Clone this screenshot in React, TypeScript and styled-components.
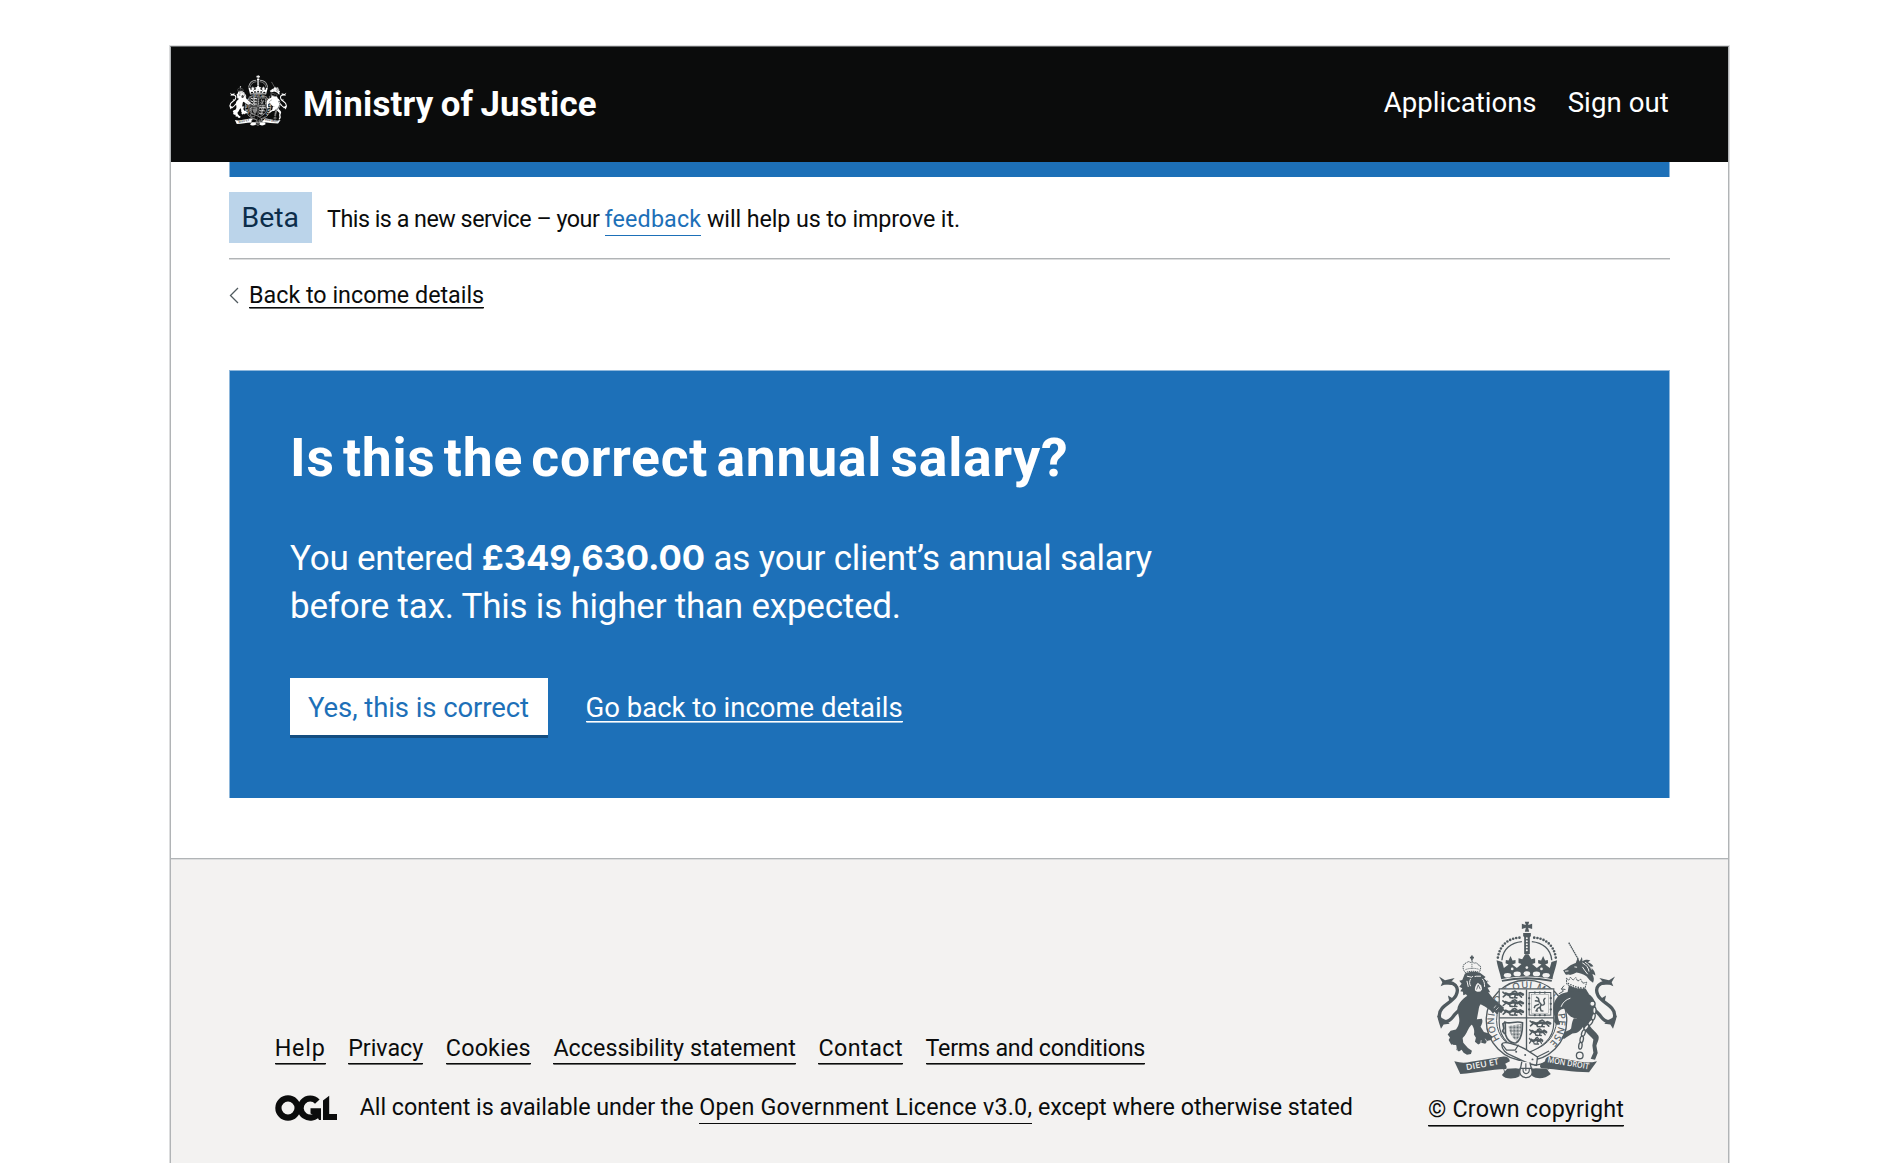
import React from "react";
import styled, { createGlobalStyle } from "styled-components";

const colour = {
  black: "#0b0c0c",
  blue: "#1d70b8",
  blueEdge: "#8eb7db",
  tagBg: "#bbd4ea",
  tagText: "#0c2d4a",
  border: "#b1b4b6",
  borderSoft: "#dcddde",
  footer: "#f3f2f1",
  crest: "#505a5f",
  white: "#ffffff",
};

const GlobalStyle = createGlobalStyle`
  *, *::before, *::after { box-sizing: border-box; }
  html, body { margin: 0; background: #fff; height: 1163px; overflow: hidden; }
  body { font-family: Roboto, "Noto Sans", sans-serif; color: ${colour.black}; }
  h1, p, ul { margin: 0; padding: 0; font-weight: 400; }
  a { color: inherit; text-decoration: none; }
`;

const Frame = styled.div`
  width: 1559px;
  height: 1163px;
  margin: 46px 0 0 170px;
  border: 1px solid ${colour.border};
  border-top-color: #626465;
  box-shadow: 0 0 0 1px ${colour.borderSoft};
  display: flex;
  flex-direction: column;
`;

const Header = styled.header`
  flex: none;
  height: 115px;
  padding: 0 59px 8px 58px;
  background: ${colour.black};
  color: ${colour.white};
  display: flex;
  align-items: center;
`;

const Organisation = styled.a`
  display: flex;
  align-items: center;
  gap: 16px;
`;

const OrganisationName = styled.span`
  font-size: 34.8px;
  line-height: 40px;
  font-weight: 700;
  letter-spacing: 0.25px;
  word-spacing: -1.8px;
  padding-top: 6px;
`;

const HeaderNav = styled.nav`
  margin-left: auto;
  display: flex;
  gap: 31px;
  padding-top: 4px;
`;

const HeaderLink = styled.a<{ $tracking?: number }>`
  font-size: 27.6px;
  line-height: 36px;
  letter-spacing: ${(p) => p.$tracking ?? 0}px;
`;

const Container = styled.div`
  flex: none;
  height: 696px;
  padding: 0 58px;
  display: flex;
  flex-direction: column;
`;

const BlueBar = styled.div`
  flex: none;
  height: 15px;
  background: ${colour.blue};
  border: solid ${colour.blueEdge};
  border-width: 0 1px;
`;

const PhaseBanner = styled.div`
  flex: none;
  height: 82px;
  padding: 15px 0;
  display: flex;
  align-items: center;
  gap: 15px;
  border-bottom: 1px solid ${colour.border};
  box-shadow: 0 1px 0 ${colour.borderSoft};
`;

const Tag = styled.strong`
  width: 83px;
  height: 51px;
  padding-left: 12.5px;
  background: ${colour.tagBg};
  color: ${colour.tagText};
  font-size: 28.4px;
  font-weight: 400;
  line-height: 51px;
`;

const PhaseText = styled.p`
  font-size: 23.3px;
  line-height: 30px;
  letter-spacing: -0.5px;
  padding-top: 3px;
  span { letter-spacing: -0.1px; }
`;

const FeedbackLink = styled.a`
  color: ${colour.blue};
  letter-spacing: 0.15px;
  padding-bottom: 2px;
  border-bottom: 1.5px solid ${colour.blue};
`;

const BackRow = styled.div`
  flex: none;
  display: flex;
  align-items: flex-start;
  gap: 10px;
  padding-top: 25px;
  height: 111px;
`;

const Chevron = styled.svg`
  width: 10px;
  height: 17px;
  margin-top: 3px;
`;

const TextLink = styled.a<{ $size: number; $tracking?: number; $gap: number }>`
  display: block;
  font-size: ${(p) => p.$size}px;
  line-height: ${(p) => 2 * (p.$gap + 0.3418 * p.$size)}px;
  letter-spacing: ${(p) => p.$tracking ?? 0}px;
  border-bottom: 1.5px solid currentColor;
  box-shadow: 0 1px 0 -0.4px currentColor;
  white-space: nowrap;
`;

const Panel = styled.main`
  flex: none;
  height: 428px;
  padding: 53px 60px 0 60px;
  background: ${colour.blue};
  color: ${colour.white};
  border: solid ${colour.blueEdge};
  border-width: 1px 1px 0;
`;

const Title = styled.h1`
  font-size: 53.5px;
  line-height: 67px;
  font-weight: 700;
  letter-spacing: 0.75px;
  word-spacing: -5.8px;
`;

const Body = styled.p`
  width: 900px;
  margin-top: 44px;
  font-size: 35px;
  line-height: 48px;
  letter-spacing: -0.22px;
  strong {
    font-family: Inter, sans-serif;
    font-size: 34.6px;
    line-height: 1;
    letter-spacing: -0.05px;
  }
`;

const Actions = styled.div`
  display: flex;
  align-items: flex-start;
  gap: 38px;
  margin: 47px 0 0 -0.5px;
`;

const Button = styled.button`
  width: 258px;
  height: 57px;
  padding: 2px 0 0;
  border: 0;
  background: ${colour.white};
  color: ${colour.blue};
  box-shadow: 0 3px 0 #144e81;
  font: 400 27.5px/55px Roboto, sans-serif;
  letter-spacing: -0.08px;
`;

const ActionLink = styled(TextLink)`
  margin-top: 17px;
`;

const Footer = styled.footer`
  flex: 1;
  padding: 0 58px 0 103.7px;
  background: ${colour.footer};
  border-top: 1px solid ${colour.border};
  box-shadow: inset 0 1px 0 ${colour.borderSoft};
  display: flex;
  justify-content: space-between;
`;

const FooterMeta = styled.div`
  padding-top: 175px;
`;

const FooterLinks = styled.ul`
  display: flex;
  gap: 22.6px;
  list-style: none;
`;

const Licence = styled.div`
  display: flex;
  align-items: center;
  gap: 22px;
  margin-top: 27px;
`;

const LicenceText = styled.p`
  font-size: 23.3px;
  line-height: 32px;
  letter-spacing: -0.04px;
  padding-bottom: 2px;
  white-space: nowrap;
  a {
    letter-spacing: 0.22px;
    padding-bottom: 2px;
    border-bottom: 1.5px solid ${colour.black};
  }
`;

const Copyright = styled.div`
  width: 196px;
  margin: 62px 46px 0 0;
  display: flex;
  flex-direction: column;
  align-items: center;
  gap: 15px;
`;

const BeltText = styled.text`
  font: 400 28px "Open Sans", "Noto Sans", sans-serif;
`;

const MottoText = styled.text`
  font: 600 25px "Open Sans", "Noto Sans", sans-serif;
`;

type CrestProps = { width: number; height: number; ink: string; paper: string; id: string };

function RoyalLion({ ink }: { ink: string }) {
  return (
    <g fill="none" stroke={ink} strokeWidth="4.8" strokeLinecap="round">
      <path d="M10 6l10 4 12-4 14 3 8-4 8 4" strokeWidth="8" />
      <path d="M10 10l-7 6M21 10l3 8 8 1M40 10l-3 8 7 1M50 9l8 8M2 2l5 4M30 2l8-3 6 4" />
    </g>
  );
}

function Tail({ ink }: { ink: string }) {
  return (
    <>
      <path d="M72 221C104 213 120 234 108 258C98 279 58 288 58 317C58 343 84 342 99 322C108 308 118 302 134 290" fill="none" stroke={ink} strokeWidth="10" />
      <path d="M57 201l18 11 29-7-10 12 8 10-26-3-14 6 5-12z" fill={ink} />
      <path d="M51 318l6 22 6 18 8-13 18-2-9-10z" fill={ink} />
      <path d="M88 276l-4-18 16 10z" fill={ink} />
    </>
  );
}

function RoyalArms({ width, height, ink, paper, id }: CrestProps) {
  return (
    <svg width={width} height={height} viewBox="48 34 544 478" preserveAspectRatio="none" aria-hidden="true">
      <defs>
        <path id={`${id}-belt`} d="M240 389A97 97 0 0 1 320 236A97 97 0 0 1 385 405" />
        <path id={`${id}-left`} d="M140 483L246 463" />
        <path id={`${id}-right`} d="M382 459L512 481" />
        <pattern id={`${id}-harp`} width="6" height="6" patternUnits="userSpaceOnUse" patternTransform="rotate(45)">
          <path d="M0 0h3v3h-3zM3 3h3v3h-3z" fill={ink} />
        </pattern>
      </defs>

      <Tail ink={ink} />
      <g transform="matrix(-1 0 0 1 643 0)">
        <Tail ink={ink} />
      </g>

      {/* garter */}
      <circle cx="320" cy="333" r="121" fill={paper} stroke={ink} strokeWidth="4" />
      <circle cx="320" cy="333" r="90" fill={paper} stroke={ink} strokeWidth="3" />
      <BeltText fill={ink} stroke={ink} strokeWidth="0.6">
        <textPath href={`#${id}-belt`} textLength="440">HONI SOIT QUI MAL Y PENSE</textPath>
      </BeltText>

      {/* shield */}
      <path d="M238 238H402V340C402 390 366 415 320 432C274 415 238 390 238 340Z" fill={paper} stroke={ink} strokeWidth="3.5" />
      <path d="M320 240V430M238 325H402" stroke={ink} strokeWidth="4" />
      {[246, 272, 298].map((y) => (
        <g key={y} transform={`translate(247 ${y})`}>
          <RoyalLion ink={ink} />
        </g>
      ))}
      {[333, 359, 385].map((y, i) => (
        <g key={y} transform={`translate(${329 - i} ${y}) scale(${1 - i * 0.17} 1)`}>
          <RoyalLion ink={ink} />
        </g>
      ))}
      <rect x="328" y="249" width="65" height="68" fill="none" stroke={ink} strokeWidth="3" />
      <rect x="334" y="255" width="53" height="56" fill="none" stroke={ink} strokeWidth="1" />
      <g fill={ink}>
        {[345, 360, 375].map((x) => (
          <g key={x}>
            <circle cx={x} cy="249" r="3.4" />
            <circle cx={x} cy="317" r="3.4" />
          </g>
        ))}
        {[266, 283, 300].map((y) => (
          <g key={y}>
            <circle cx="328" cy={y} r="3.4" />
            <circle cx="393" cy={y} r="3.4" />
          </g>
        ))}
      </g>
      <path
        d="M349 262l7 5 2 10 6 8-3 9 3 11M357 275l-12-1M358 284l-12 5-3 7M362 292l-9 5-4 8M364 286c8 3 12-2 9-9-3-5 0-9 4-11M347 304l8 1M363 304l8 1"
        fill="none"
        stroke={ink}
        strokeWidth="4.4"
      />
      <path d="M256 338c14 8 32-6 52 2l-1 22c-2 16-8 32-18 38-16 4-28-10-32-24z" fill={paper} stroke={ink} strokeWidth="5" />
      <path d="M266 350l38-6c1 22-4 42-15 50-12-8-20-22-23-44z" fill={`url(#${id}-harp)`} />
      <path d="M256 338l-7 5 3 14-4 8 7 9" fill="none" stroke={ink} strokeWidth="5" />

      {/* crown */}
      <path d="M315 36h13l-3 10 12-4v16l-12-4 3 12h-13l3-12-12 4V42l12 4z" fill={ink} />
      <path d="M310 70h23v9l-3 4v50h-17V83l-3-4z" fill={ink} />
      <path d="M321 86v44" stroke={paper} strokeWidth="6" strokeDasharray="0 9" strokeLinecap="round" />
      <path d="M234 144C240 105 268 84 303 84M408 144C402 105 374 84 340 84" fill="none" stroke={ink} strokeWidth="8" strokeLinecap="round" strokeDasharray="0 9.6" />
      <path d="M246 152C249 118 274 99 306 96M396 152C393 118 368 99 336 96" fill="none" stroke={ink} strokeWidth="4" />
      <path
        d="M230 152l17 5 5 18 14-10-9-4 1-10 8 2 6-14 6 14 9-2v10l-10 4 14 10 14-12-9-3v-14l11 3 9-15h10l9 15 11-3v14l-9 3 14 12 14-10-10-4v-10l9 2 6-14 6 14 8-2 1 10-9 4 14 10 5-18 17-5c-4 25-11 38-14 57-52-11-102-11-154 0-3-19-10-32-14-57z"
        fill={ink}
      />
      <g fill={paper}>
        <ellipse cx="263" cy="197" rx="11" ry="7" />
        <ellipse cx="292" cy="193" rx="11" ry="7" />
        <ellipse cx="321" cy="192" rx="10" ry="7" />
        <ellipse cx="350" cy="193" rx="11" ry="7" />
        <ellipse cx="379" cy="197" rx="11" ry="7" />
        <circle cx="277" cy="178" r="4" />
        <circle cx="321" cy="174" r="4" />
        <circle cx="365" cy="178" r="4" />
      </g>
      <path d="M246 214c50-11 100-11 150 0" fill="none" stroke={ink} strokeWidth="6" />

      {/* lion supporter */}
      <g fill={paper} stroke={ink} strokeWidth="3">
        <path d="M136 189c-12-14-6-28 4-29 3-5 8-5 11-1 4-5 10-2 11 2 6-3 12 0 12 5 10 0 10 12 4 22-14-4-28-4-42 1z" strokeDasharray="4 2" />
        <path d="M156 138v14M150 144h12" strokeWidth="5" />
        <path d="M137 180c14-5 28-5 42 0M156 152v26" strokeDasharray="3 3" />
      </g>
      <g fill={ink}>
        <path d="M135 192c14-7 32-7 46-2l16 12-5 5 14 8-5 5 12 12-10 3 8 13-11 0 2 12-10-3-4 8-10-5-26-2-8 4-6-8-8 3-1-10-8-2 6-9-9-4 7-9-7-9 9-3z" />
        <path d="M176 243l24-4c8 14 18 27 30 37l22 18-3 11-5 6-8-5-5 9-7-8-5 5-7-9-17-12-13-7c-6 6-5 16-8 28l-4 22c-9 8-16 12-22 20-6 10-9 22-20 32l2 14 14 16 12 8-3 10-12 2-10-6-6-9-8 5-9-5 1-14-15-1-8-14 4-8-7-9 9-11 16-4c5-6 9-14 10-24 1-12-4-24-6-36 2-20 20-36 40-47z" />
        <path d="M144 332l42-4c4 8 0 16-4 24l10 16 15 4 11 10-4 10-11 2-7 9-12-3-9 5-10-8 3-12-6-10c4-16-4-30-18-43z" />
      </g>
      <g fill="none" stroke={paper} strokeWidth="3">
        <path d="M141 200l14 3 4-3M164 201l6-1 13 0M152 208c-4 8-4 14 0 22M187 208c6 6 7 14 7 24M196 208l7 8M141 214l4 18M180 246c3-6 4-12 2-20" />
        <path d="M96 404l9 14M108 410l4 16M184 392l-2 12M196 388l6 10M236 294l-8 8M228 288l-6 8" strokeWidth="2" />
      </g>
      <path d="M165 242c-1-10 3-16 9-22 7 6 13 13 12 21-5 7-14 8-21 1z" fill={paper} />
      <path d="M170 240l5-14 6 13" fill="none" stroke={ink} strokeWidth="2.5" />

      {/* unicorn supporter */}
      <path d="M447 99l28 49" stroke={ink} strokeWidth="4" strokeDasharray="5 1.5" />
      <g fill={ink}>
        <path d="M430 182c8-2 12-6 18-12 8-6 14-8 20-10l6-16 6 12 6-14c2 5 2 9 2 13 10-6 18-5 24-2-4 2-6 4-7 6 8 2 13 6 16 12-4-1-7 0-9 1 10 8 15 16 15 26-4-3-6-4-9-4 5 9 6 16 2 26l-10-8-10-12c-10-6-20-10-30-11-6 3-12 7-20 7-4-3-8 2-13-2z" />
        <path d="M448 224l50 14 10 16-66 2z" />
        <path d="M404 322c-6-24-4-44 8-58 6-8 14-13 26-15l18-4c22-2 42 0 56 12 12 10 18 26 14 44-3 14-12 22-14 32l-2 16c8 12 18 18 26 30 4 10-4 20-6 30l4 22-8 20-13-3 8-18-3-22 3-18c-12-14-26-22-32-38-6-6-12-10-18-24-14-2-28-10-36-30-8 0-18 4-20 14-3 10 3 20 6 32l-10 3-8-10z" />
        <path d="M462 326l34 8c-2 12-6 22-16 30-8 8-14 8-22 8-8 6-16 8-24 16l-10-1 10-18c8-6 16-6 20-12 2-10 2-20 8-31z" />
      </g>
      <g fill="none" stroke={paper} strokeWidth="3">
        <path d="M464 172l8 1M436 185l10-1M488 160c12 6 18 14 20 26M496 158c10 6 16 12 20 22M488 172c6 8 10 16 16 22" />
        <path d="M424 292c4-12 14-22 28-26" />
      </g>
      <path d="M440 206l7 6 5-9 8 9 8-8 6 11 9-6 6 12 12-3-6 20c-18 2-38-4-54-14z" fill={paper} stroke={ink} strokeWidth="3" strokeDasharray="6 2" />
      <path d="M446 222c16 8 30 14 48 14" fill="none" stroke={ink} strokeWidth="5" strokeLinecap="round" strokeDasharray="0 8" />
      <path d="M433 228l-8 10 6 7-14 8M425 238l12 2" fill="none" stroke={ink} strokeWidth="3" />
      <g fill={paper} stroke={ink} strokeWidth="4">
        <circle cx="518" cy="283" r="8" />
        {[
          [524, 303, 0],
          [521, 322, 14],
          [512, 339, 36],
          [500, 354, 36],
          [491, 371, 20],
          [486, 390, 10],
          [482, 409, 8],
        ].map(([x, y, r]) => (
          <ellipse key={y} cx={x} cy={y} rx="5" ry="10" transform={`rotate(${r} ${x} ${y})`} />
        ))}
        <circle cx="480" cy="438" r="10" />
      </g>

      {/* belt end and motto scroll */}
      <path d="M246 404c4-8 18-4 30-1 28 6 48 20 77 40l-3 25c-32-5-56-22-76-30-14-4-30-18-28-34z" fill={paper} stroke={ink} strokeWidth="4" />
      <path d="M352 443l36-18M344 468l30-6 20-22M246 404l14 18 26 0 10-16" fill="none" stroke={ink} strokeWidth="3.5" />
      <g fill={ink}>
        <circle cx="289" cy="427" r="3" />
        <circle cx="316" cy="437" r="3" />
        <circle cx="338" cy="450" r="3" />
        <path d="M103 456c20 5 34 5 50 1l94-15c14-2 22 4 23 14l-14 7c4 6 6 10 3 16-50 2-86 11-138 15z" />
        <path d="M532 456c-20 5-34 4-50 1l-84-15c-15-3-22 4-22 14l-13 7c-4 6-3 10 2 14 50 3 92 12 143 12z" />
        <path d="M262 478l26-1 14 2-3 22c-16 10-45 9-53-4z" />
        <path d="M380 478l-32-1-14 1 3 22c16 11 40 8 56-6z" />
      </g>
      <path d="M250 462c-4 14 6 18 4 32M386 464c4 14-6 18-4 28" fill="none" stroke={ink} strokeWidth="2.5" />
      <path d="M306 457l-4 20c-14 36 46 38 33 2l-5-20" fill={paper} stroke={ink} strokeWidth="4" />
      <path d="M310 478c-4 20 22 20 18 0M318 462v22M299 477h39" fill="none" stroke={ink} strokeWidth="3.5" />
      <MottoText fill={paper}>
        <textPath href={`#${id}-left`} textLength="100" lengthAdjust="spacingAndGlyphs">DIEU ET</textPath>
      </MottoText>
      <MottoText fill={paper}>
        <textPath href={`#${id}-right`} textLength="126" lengthAdjust="spacingAndGlyphs">MON DROIT</textPath>
      </MottoText>
    </svg>
  );
}

function OglLogo() {
  return (
    <svg width="63" height="26" viewBox="0 0 63 26" aria-label="OGL">
      <g fill="none" stroke={colour.black}>
        <circle cx="13" cy="13" r="9.6" strokeWidth="6.2" />
        <path d="M42.3 6.6A9.6 9.6 0 1 0 43.5 18" strokeWidth="6.2" />
      </g>
      <path d="M35.5 13.2H46V25h-2l-1.6-3-6.9-3.6zM48 5.5L54.2.8V19H62v6H48z" fill={colour.black} />
    </svg>
  );
}

const footerLinks: { label: string; tracking: number }[] = [
  { label: "Help", tracking: 0.8 },
  { label: "Privacy", tracking: -0.04 },
  { label: "Cookies", tracking: 0.2 },
  { label: "Accessibility statement", tracking: 0.03 },
  { label: "Contact", tracking: 0.45 },
  { label: "Terms and conditions", tracking: -0.24 },
];

export default function App() {
  return (
    <>
      <GlobalStyle />
      <Frame>
        <Header>
          <Organisation href="#">
            <RoyalArms id="header" width={58} height={51} ink={colour.white} paper={colour.black} />
            <OrganisationName>Ministry of Justice</OrganisationName>
          </Organisation>
          <HeaderNav>
            <HeaderLink href="#">Applications</HeaderLink>
            <HeaderLink href="#" $tracking={0.09}>Sign out</HeaderLink>
          </HeaderNav>
        </Header>

        <Container>
          <BlueBar />
          <PhaseBanner>
            <Tag>Beta</Tag>
            <PhaseText>
              This is a new service – your <FeedbackLink href="#">feedback</FeedbackLink>
              <span> will help us to improve it.</span>
            </PhaseText>
          </PhaseBanner>

          <BackRow>
            <Chevron viewBox="0 0 10 17">
              <path d="M9 1L1.5 8.5 9 16" fill="none" stroke={colour.crest} strokeWidth="1.3" />
            </Chevron>
            <TextLink href="#" $size={23.3} $gap={3.5}>Back to income details</TextLink>
          </BackRow>

          <Panel>
            <Title>Is this the correct annual salary?</Title>
            <Body>
              You entered <strong>£349,630.00</strong> as your client’s annual salary
              <br />
              before tax. This is higher than expected.
            </Body>
            <Actions>
              <Button type="button">Yes, this is correct</Button>
              <ActionLink href="#" $size={27.5} $gap={3.5}>Go back to income details</ActionLink>
            </Actions>
          </Panel>
        </Container>

        <Footer>
          <FooterMeta>
            <FooterLinks>
              {footerLinks.map((l) => (
                <li key={l.label}>
                  <TextLink href="#" $size={23.3} $gap={6.5} $tracking={l.tracking}>{l.label}</TextLink>
                </li>
              ))}
            </FooterLinks>
            <Licence>
              <OglLogo />
              <LicenceText>
                All content is available under the <a href="#">Open Government Licence v3.0,</a> except where otherwise stated
              </LicenceText>
            </Licence>
          </FooterMeta>
          <Copyright>
            <RoyalArms id="footer" width={181} height={159} ink={colour.crest} paper={colour.footer} />
            <TextLink href="#" $size={23.3} $gap={7} $tracking={0.18}>© Crown copyright</TextLink>
          </Copyright>
        </Footer>
      </Frame>
    </>
  );
}
